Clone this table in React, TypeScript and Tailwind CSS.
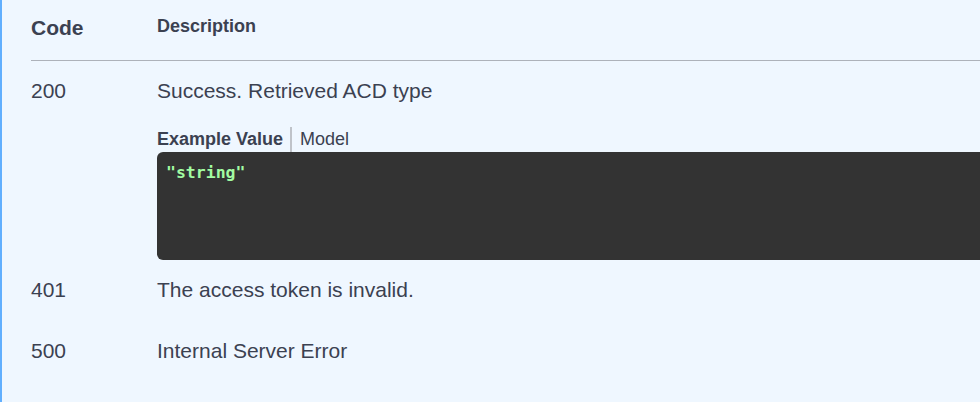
const rows = [
  { code: "401", text: "The access token is invalid.", gap: "mt-[19px]" },
  { code: "500", text: "Internal Server Error", gap: "mt-[40px]" },
];

export default function App() {
  return (
    <div className="h-[402px] w-[980px] overflow-hidden border-l-2 border-[#61affe] bg-[#eff7ff] pl-[29px] font-['Liberation_Sans',Arial,sans-serif] text-[#3b4151]">
      {/* table head */}
      <div className="flex h-[61px] items-start border-b border-[#adb2ba] pt-[17px]">
        <div className="w-[126px] shrink-0 text-[21px] font-bold leading-none">Code</div>
        <div className="text-[18px] font-bold leading-none">Description</div>
      </div>

      {/* 200 */}
      <div className="mt-[19px] flex items-start">
        <div className="w-[126px] shrink-0 text-[21px] leading-none">200</div>
        <div className="min-w-0 flex-1">
          <div className="text-[21px] leading-none">Success. Retrieved ACD type</div>
          <div className="mt-[26px] flex h-[25px] items-start text-[18px] leading-none">
            <span className="h-full border-r-2 border-[#bfc3c9] pt-[3px] pr-[7px] font-bold">Example Value</span>
            <span className="pt-[3px] pl-[8px]">Model</span>
          </div>
          <div className="h-[108px] w-[900px] rounded-[6px] bg-[#333333] pt-[13px] pl-[9px]">
            <div className="font-['DejaVu_Sans_Mono',monospace] text-[16.5px] font-bold leading-none text-[#a2fca2]">"string"</div>
          </div>
        </div>
      </div>

      {rows.map((r) => (
        <div key={r.code} className={`${r.gap} flex items-start`}>
          <div className="w-[126px] shrink-0 text-[21px] leading-none">{r.code}</div>
          <div className="text-[21px] leading-none">{r.text}</div>
        </div>
      ))}
    </div>
  );
}
